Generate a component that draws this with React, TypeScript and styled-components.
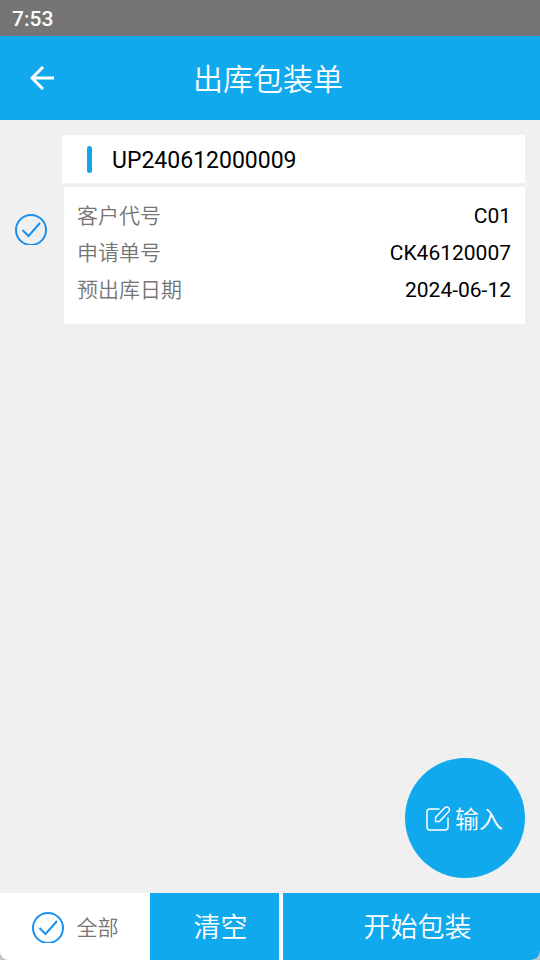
import React, { useState } from "react";
import styled, { createGlobalStyle } from "styled-components";

const blue = "#11a9ed";
const checkBlue = "#1890f0";

const GlobalStyle = createGlobalStyle`
  *, *::before, *::after { box-sizing: border-box; }
  body {
    margin: 0;
    background: #c4c4c4;
    font-family: Roboto, "Noto Sans CJK SC", sans-serif;
    color: #000;
  }
  button { font: inherit; border: 0; padding: 0; cursor: pointer; }
`;

const Screen = styled.div`
  position: relative;
  display: flex;
  flex-direction: column;
  min-height: 100vh;
  background: #f0f0f0;
  border-radius: 0 0 9px 9px;
  overflow: hidden;
`;

const StatusBar = styled.div`
  height: 36px;
  padding: 1px 12px 0;
  background: #757575;
  color: #fff;
  font-size: 21px;
  font-weight: 500;
  line-height: 36px;
`;

const Header = styled.header`
  display: grid;
  grid-template-columns: 84px 1fr 88px;
  align-items: center;
  height: 84px;
  background: ${blue};
  color: #fff;
`;

const BackButton = styled.button`
  display: flex;
  align-items: center;
  justify-content: center;
  height: 84px;
  background: none;
  color: inherit;
`;

const Title = styled.h1`
  margin: 0;
  padding-top: 4px;
  font-size: 30px;
  font-weight: 350;
  line-height: 44px;
  text-align: center;
`;

const List = styled.main`
  flex: 1;
  padding: 15px;
`;

const Order = styled.article`
  display: grid;
  grid-template-columns: 47px 1fr;
  align-items: center;
`;

const CheckLabel = styled.label`
  display: flex;
  align-items: center;
  gap: 13px;
  color: #757575;
  font-size: 21px;
  font-weight: 350;
  line-height: 30px;
  cursor: pointer;
`;

const HiddenCheckbox = styled.input`
  position: absolute;
  width: 1px;
  height: 1px;
  margin: 0;
  opacity: 0;
`;

const CheckIcon = styled.svg`
  display: block;
  width: 32px;
  height: 31px;
  fill: none;
  stroke: ${checkBlue};
  stroke-width: 2;
`;

const Card = styled.div`
  display: flex;
  flex-direction: column;
  gap: 4px;
`;

const CardHeader = styled.div`
  display: flex;
  align-items: center;
  gap: 20px;
  height: 48px;
  padding-left: 25px;
  background: #fff;
`;

const Marker = styled.span`
  width: 5px;
  height: 27px;
  border-radius: 3px;
  background: ${blue};
`;

const OrderNumber = styled.h2`
  margin: 0;
  padding-top: 4px;
  font-size: 23px;
  font-weight: 400;
  line-height: 30px;
`;

const Details = styled.dl`
  margin: 0 0 0 2px;
  padding: 10px 14px 16px 13px;
  background: #fff;
`;

const DetailRow = styled.div`
  display: flex;
  align-items: center;
  justify-content: space-between;
  height: 37px;
  font-size: 21px;
  line-height: 30px;
`;

const Term = styled.dt`
  color: #757575;
  font-weight: 350;
`;

const Value = styled.dd`
  margin: 0;
`;

const InputButton = styled.button`
  position: absolute;
  right: 15px;
  bottom: 82px;
  display: flex;
  align-items: center;
  justify-content: center;
  gap: 4px;
  width: 120px;
  height: 120px;
  border-radius: 50%;
  background: ${blue};
  color: #fff;
  && {
    padding: 0 1px 1px 0;
    font-size: 24px;
    font-weight: 350;
  }
`;

const Footer = styled.footer`
  display: grid;
  grid-template-columns: 150fr 129fr 4px 257fr;
  height: 67px;
  background: #fff;
`;

const SelectAll = styled.div`
  display: flex;
  align-items: center;
  justify-content: center;
  padding-top: 2px;
`;

const ActionButton = styled.button<{ $last?: boolean }>`
  grid-column: ${(p) => (p.$last ? 4 : 2)};
  background: ${blue};
  color: #fff;
  && {
    padding: 0 0 2px 12px;
    font-size: 27px;
    font-weight: 350;
  }
`;

interface CheckProps {
  checked: boolean;
  onChange: (value: boolean) => void;
  name: string;
  children?: React.ReactNode;
}

function Check({ checked, onChange, name, children }: CheckProps) {
  return (
    <CheckLabel>
      <HiddenCheckbox
        type="checkbox"
        aria-label={name}
        checked={checked}
        onChange={(e) => onChange(e.target.checked)}
      />
      <CheckIcon viewBox="0 0 32 31" aria-hidden="true">
        <circle cx="16" cy="16" r="15" />
        {checked && <path d="M7.5 16 L13.5 22 L25 9" />}
      </CheckIcon>
      {children}
    </CheckLabel>
  );
}

const details = [
  { term: "客户代号", value: "C01" },
  { term: "申请单号", value: "CK46120007" },
  { term: "预出库日期", value: "2024-06-12" },
];

export default function App() {
  const [selected, setSelected] = useState(true);

  return (
    <>
      <GlobalStyle />
      <Screen>
        <StatusBar>7:53</StatusBar>
        <Header>
          <BackButton type="button" aria-label="返回">
            <svg width="24" height="24" viewBox="0 0 24 24" fill="none" stroke="currentColor" strokeWidth="3">
              <path d="M13 1 L2 12 L13 23 M2 12 H24" />
            </svg>
          </BackButton>
          <Title>出库包装单</Title>
        </Header>
        <List>
          <Order>
            <Check checked={selected} onChange={setSelected} name="UP240612000009" />
            <Card>
              <CardHeader>
                <Marker />
                <OrderNumber>UP240612000009</OrderNumber>
              </CardHeader>
              <Details>
                {details.map((d) => (
                  <DetailRow key={d.term}>
                    <Term>{d.term}</Term>
                    <Value>{d.value}</Value>
                  </DetailRow>
                ))}
              </Details>
            </Card>
          </Order>
        </List>
        <InputButton type="button">
          <svg width="25" height="26" viewBox="0 0 25 26" fill="none" stroke="currentColor" strokeWidth="1.5" strokeLinejoin="round" strokeLinecap="round" aria-hidden="true">
            <path d="M13 4 H4 Q1 4 1 7 V22 Q1 25 4 25 H19 Q22 25 22 22 V13" />
            <path d="M9.5 16.5 V12.5 L18.5 3 Q20.5 1 22.5 2.7 Q24.5 4.5 22.5 6.7 L13.5 16.5 Z" />
          </svg>
          <span>输入</span>
        </InputButton>
        <Footer>
          <SelectAll>
            <Check checked={selected} onChange={setSelected} name="全部">
              <span>全部</span>
            </Check>
          </SelectAll>
          <ActionButton type="button" onClick={() => setSelected(false)}>清空</ActionButton>
          <ActionButton type="button" $last>开始包装</ActionButton>
        </Footer>
      </Screen>
    </>
  );
}
